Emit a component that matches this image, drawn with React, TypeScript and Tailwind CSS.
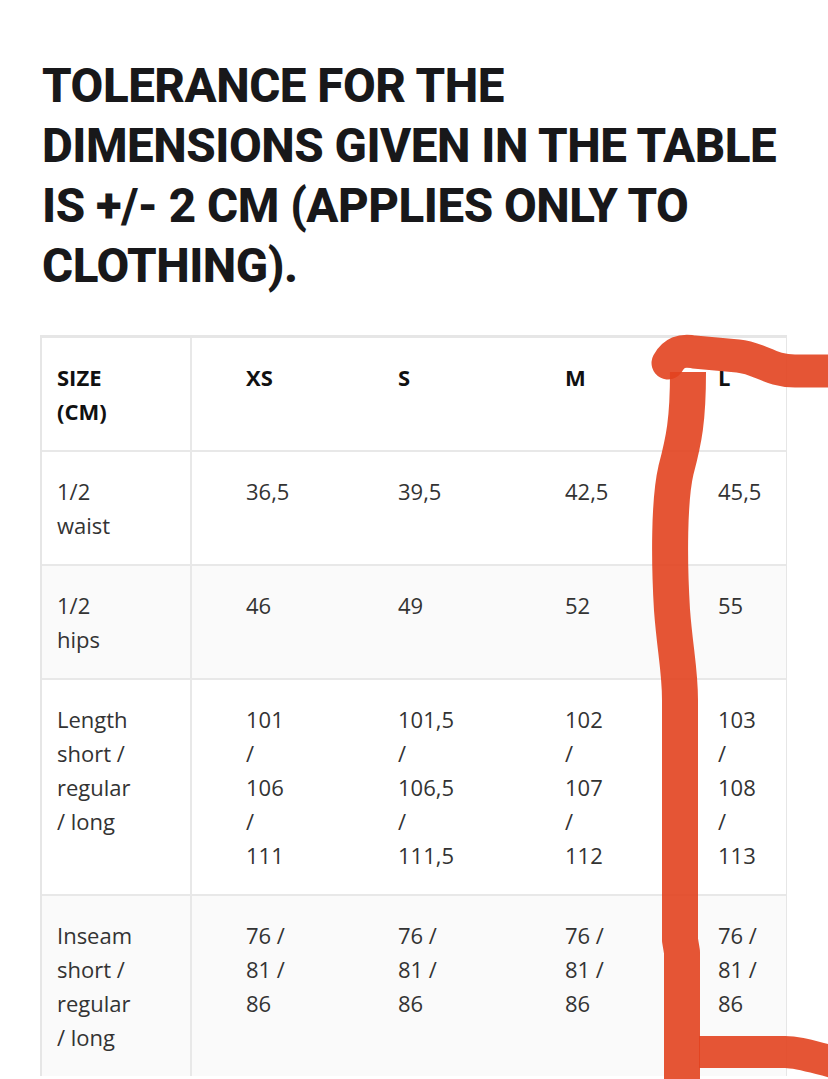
const heading = [
  "TOLERANCE FOR THE",
  "DIMENSIONS GIVEN IN THE TABLE",
  "IS +/- 2 CM (APPLIES ONLY TO",
  "CLOTHING).",
];

type Row = { label: string[]; cells: string[][]; shaded?: boolean; head?: boolean };

const rows: Row[] = [
  { head: true, label: ["SIZE", "(CM)"], cells: [["XS"], ["S"], ["M"], ["L"]] },
  { label: ["1/2", "waist"], cells: [["36,5"], ["39,5"], ["42,5"], ["45,5"]] },
  { shaded: true, label: ["1/2", "hips"], cells: [["46"], ["49"], ["52"], ["55"]] },
  {
    label: ["Length", "short /", "regular", "/ long"],
    cells: [
      ["101", "/", "106", "/", "111"],
      ["101,5", "/", "106,5", "/", "111,5"],
      ["102", "/", "107", "/", "112"],
      ["103", "/", "108", "/", "113"],
    ],
  },
  {
    shaded: true,
    label: ["Inseam", "short /", "regular", "/ long"],
    cells: [
      ["76 /", "81 /", "86"],
      ["76 /", "81 /", "86"],
      ["76 /", "81 /", "86"],
      ["76 /", "81 /", "86"],
    ],
  },
];

const colPad = ["pl-[54px]", "pl-[15px]", "pl-[15px]", "pl-[15px]"];

function Lines({ lines }: { lines: string[] }) {
  return (
    <>
      {lines.map((l, i) => (
        <div key={i} className="whitespace-pre">
          {l}
        </div>
      ))}
    </>
  );
}

function Marker() {
  return (
    <svg
      className="absolute inset-0 pointer-events-none"
      width="828"
      height="1079"
      viewBox="0 0 828 1079"
      fill="none"
    >
      <g stroke="#e2421f" strokeOpacity="0.9" strokeLinecap="round" strokeLinejoin="round">
        <path
          d="M668 363 Q 676 348 694 352 L 738 356 C 760 358, 770 371, 795 371 L 850 371"
          strokeWidth="33"
        />
        <path
          d="M688 372 C 688 420, 684 440, 676 470 C 669 500, 669 560, 672 610 C 675 650, 680 670, 680 700 L 680 940 L 682 952 L 682 1100"
          strokeWidth="36"
          strokeLinecap="butt"
        />
        <path
          d="M699 1052 L 785 1052 C 800 1052, 815 1058, 850 1066"
          strokeWidth="32"
          strokeLinecap="butt"
        />
      </g>
    </svg>
  );
}

export default function App() {
  return (
    <div className="relative w-[828px] h-[1079px] overflow-hidden bg-white pl-10">
      <h1 className="pt-[56px] pl-[2px] font-['Roboto',sans-serif] font-extrabold text-[47.5px] leading-[60px] tracking-[-0.01em] text-[#18181a]">
        {heading.map((l) => (
          <div key={l} className="whitespace-pre">
            {l}
          </div>
        ))}
      </h1>

      <div className="mt-[39px] w-[747px] border-t-[3px] border-l-2 border-r border-[#e6e6e6] font-['Open_Sans',sans-serif] text-[22px] leading-[34px] text-[#333]">
        {rows.map((r, i) => (
          <div
            key={i}
            className={`grid grid-cols-[150px_191px_167px_153px_83px] ${i > 0 ? "border-t-2 border-[#e8e8e8]" : ""} ${r.shaded ? "bg-[#fafafa]" : "bg-white"}`}
          >
            <div
              className={`border-r-2 border-[#e8e8e8] pl-[15px] py-[22px] ${r.head ? "font-bold text-[#111]" : ""}`}
            >
              <Lines lines={r.label} />
            </div>
            {r.cells.map((c, j) => (
              <div
                key={j}
                className={`${colPad[j]} py-[22px] ${r.head ? "font-bold text-[#111]" : ""}`}
              >
                <Lines lines={c} />
              </div>
            ))}
          </div>
        ))}
      </div>

      <Marker />
    </div>
  );
}
